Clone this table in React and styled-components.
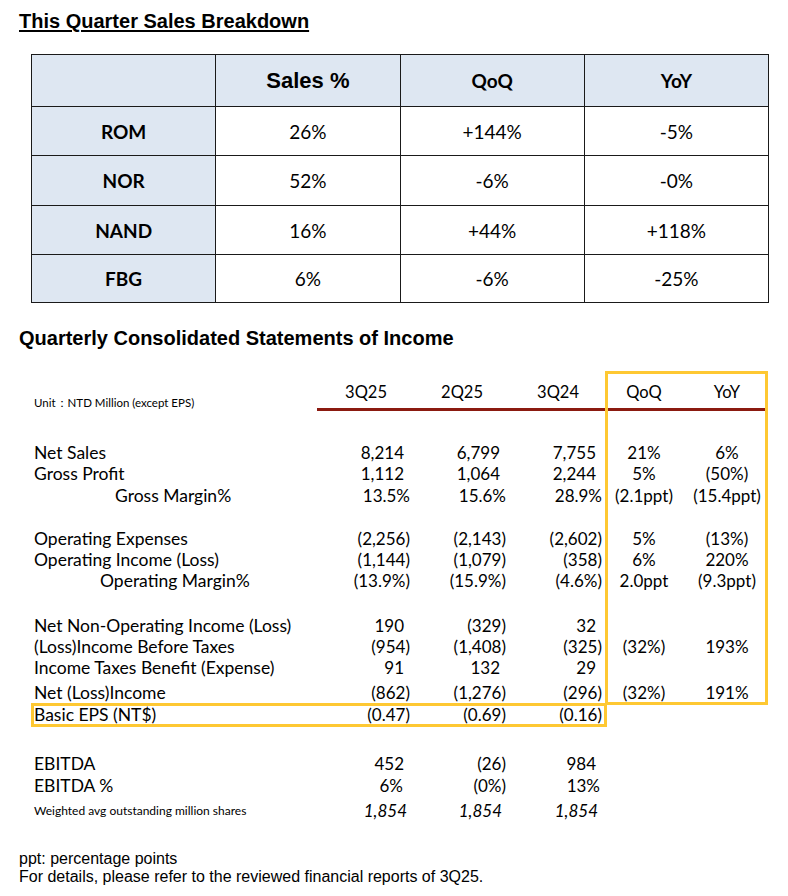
import React from 'react';
import styled, { createGlobalStyle } from 'styled-components';

const GlobalStyle = createGlobalStyle`
  html, body {
    margin: 0;
    padding: 0;
    background: #ffffff;
  }
  body {
    font-family: "Liberation Sans", Arial, sans-serif;
    color: #000;
  }
`;

const Page = styled.div`
  width: 788px;
  padding: 9px 0 0 19px;
  box-sizing: border-box;
`;

const SectionTitle = styled.h2`
  margin: ${p => p.$mt || 0}px 0 0 0;
  font-family: "Liberation Sans", Arial, sans-serif;
  font-size: 20px;
  line-height: 24px;
  font-weight: 700;
  text-decoration: ${p => (p.$underline ? 'underline' : 'none')};
  text-underline-offset: 2px;
`;

/* Sales breakdown table */
const SalesTable = styled.table`
  margin: 21px 0 0 12px;
  width: 738px;
  border-collapse: collapse;
  table-layout: fixed;
  font-family: Lato, "Open Sans", sans-serif;
  font-size: 19px;
`;

const HeadCell = styled.th`
  height: 51px;
  background: #dee7f2;
  border: 1px solid #1a1a1a;
  font-weight: 700;
  font-family: ${p => (p.$arial ? '"Liberation Sans", Arial, sans-serif' : 'Lato, "Open Sans", sans-serif')};
  font-size: ${p => (p.$arial ? 22 : 19)}px;
  text-align: center;
  padding: 0;
`;

const NameCell = styled.td`
  height: ${p => p.$h}px;
  background: #dee7f2;
  border: 1px solid #1a1a1a;
  font-weight: 700;
  text-align: center;
  padding: 0;
`;

const ValueCell = styled.td`
  border: 1px solid #1a1a1a;
  text-align: center;
  padding: 0;
`;

/* Income statement */
const Statement = styled.div`
  position: relative;
  margin: 21px 0 0 12px;
  width: 737px;
  font-family: Lato, "Open Sans", sans-serif;
  font-size: 17px;
`;

const Row = styled.div`
  display: grid;
  grid-template-columns: 286px 93px 96px 96px 84px 82px;
  height: ${p => p.$h || 21}px;
  align-items: center;
`;

const HeaderRow = styled(Row)`
  align-items: stretch;
`;

const UnitLabel = styled.div`
  font-size: 11.5px;
  padding: 25px 0 0 3px;
  white-space: nowrap;
`;

const ColHead = styled.div`
  border-bottom: 3px solid #8b1a10;
  display: flex;
  align-items: center;
  justify-content: ${p => (p.$center ? 'center' : 'flex-end')};
  padding-right: ${p => (p.$center ? 0 : 23)}px;
  padding-top: 5px;
  font-size: 16.5px;
`;

const Label = styled.div`
  padding-left: ${p => 3 + (p.$indent || 0)}px;
  font-size: ${p => (p.$small ? 12 : 17.5)}px;
  white-space: nowrap;
`;

const Num = styled.div`
  text-align: right;
  padding-right: ${p => p.$pad}px;
  font-style: ${p => (p.$italic ? 'italic' : 'normal')};
  font-size: 17px;
  white-space: nowrap;
`;

const Change = styled.div`
  text-align: center;
  white-space: nowrap;
`;

const Spacer = styled.div`
  height: ${p => p.$h}px;
`;

const Highlight = styled.div`
  position: absolute;
  left: ${p => p.$x}px;
  top: ${p => p.$y}px;
  width: ${p => p.$w}px;
  height: ${p => p.$h}px;
  border: 3px solid #fec832;
  box-sizing: border-box;
  pointer-events: none;
`;

const Notes = styled.div`
  margin-top: 27px;
  font-family: "Liberation Sans", Arial, sans-serif;
  font-size: 16px;
  line-height: 18px;
`;

const sales = [
  { name: 'ROM', share: '26%', qoq: '+144%', yoy: '-5%', h: 48 },
  { name: 'NOR', share: '52%', qoq: '-6%', yoy: '-0%', h: 49 },
  { name: 'NAND', share: '16%', qoq: '+44%', yoy: '+118%', h: 48 },
  { name: 'FBG', share: '6%', qoq: '-6%', yoy: '-25%', h: 47 },
];

const padFor = v => (/[)%]$/.test(v) ? 0 : 6);

const income = [
  { label: 'Net Sales', v: ['8,214', '6,799', '7,755'], q: '21%', y: '6%', h: 21 },
  { label: 'Gross Profit', v: ['1,112', '1,064', '2,244'], q: '5%', y: '(50%)', h: 21 },
  { label: 'Gross Margin%', indent: 81, v: ['13.5%', '15.6%', '28.9%'], q: '(2.1ppt)', y: '(15.4ppt)', h: 22 },
  { gap: 22 },
  { label: 'Operating Expenses', v: ['(2,256)', '(2,143)', '(2,602)'], q: '5%', y: '(13%)', h: 21 },
  { label: 'Operating Income (Loss)', v: ['(1,144)', '(1,079)', '(358)'], q: '6%', y: '220%', h: 20 },
  { label: 'Operating Margin%', indent: 66, v: ['(13.9%)', '(15.9%)', '(4.6%)'], q: '2.0ppt', y: '(9.3ppt)', h: 22 },
  { gap: 24 },
  { label: 'Net Non-Operating Income (Loss)', v: ['190', '(329)', '32'], h: 21 },
  { label: '(Loss)Income Before Taxes', v: ['(954)', '(1,408)', '(325)'], q: '(32%)', y: '193%', h: 21 },
  { label: 'Income Taxes Benefit (Expense)', v: ['91', '132', '29'], h: 21 },
  { label: 'Net (Loss)Income', v: ['(862)', '(1,276)', '(296)'], q: '(32%)', y: '191%', h: 25, top: 4 },
  { label: 'Basic EPS (NT$)', v: ['(0.47)', '(0.69)', '(0.16)'], h: 23 },
  { gap: 26 },
  { label: 'EBITDA', v: ['452', '(26)', '984'], h: 22 },
  { label: 'EBITDA %', v: ['6%', '(0%)', '13%'], pads: [7, 0, 2], h: 23 },
  { label: 'Weighted avg outstanding million shares', small: true, italic: true, v: ['1,854', '1,854', '1,854'], pads: [3, 4, 4], h: 26 },
];

const App = () => (
  <Page>
    <GlobalStyle />
    <SectionTitle $underline>This Quarter Sales Breakdown</SectionTitle>

    <SalesTable>
      <thead>
        <tr>
          <HeadCell />
          <HeadCell $arial>Sales %</HeadCell>
          <HeadCell>QoQ</HeadCell>
          <HeadCell>YoY</HeadCell>
        </tr>
      </thead>
      <tbody>
        {sales.map(s => (
          <tr key={s.name}>
            <NameCell $h={s.h}>{s.name}</NameCell>
            <ValueCell>{s.share}</ValueCell>
            <ValueCell>{s.qoq}</ValueCell>
            <ValueCell>{s.yoy}</ValueCell>
          </tr>
        ))}
      </tbody>
    </SalesTable>

    <SectionTitle $mt={23}>Quarterly Consolidated Statements of Income</SectionTitle>

    <Statement>
      <HeaderRow $h={40}>
        <UnitLabel>Unit：NTD Million (except EPS)</UnitLabel>
        <ColHead>3Q25</ColHead>
        <ColHead>2Q25</ColHead>
        <ColHead>3Q24</ColHead>
        <ColHead $center>QoQ</ColHead>
        <ColHead $center>YoY</ColHead>
      </HeaderRow>
      <Spacer $h={31} />

      {income.map((r, i) =>
        r.gap ? (
          <Spacer key={i} $h={r.gap} />
        ) : (
          <Row key={i} $h={r.h} style={r.top ? { paddingTop: r.top, boxSizing: 'border-box' } : undefined}>
            <Label $indent={r.indent} $small={r.small}>{r.label}</Label>
            {r.v.map((v, j) => (
              <Num key={j} $pad={r.pads ? r.pads[j] : padFor(v)} $italic={r.italic}>{v}</Num>
            ))}
            <Change>{r.q || ''}</Change>
            <Change>{r.y || ''}</Change>
          </Row>
        )
      )}

      {/* yellow highlight frames */}
      <Highlight $x={574} $y={0} $w={163} $h={334} />
      <Highlight $x={0} $y={332} $w={576} $h={24} />
    </Statement>

    <Notes>
      <div>ppt: percentage points</div>
      <div>For details, please refer to the reviewed financial reports of 3Q25.</div>
    </Notes>
  </Page>
);

export default App;
